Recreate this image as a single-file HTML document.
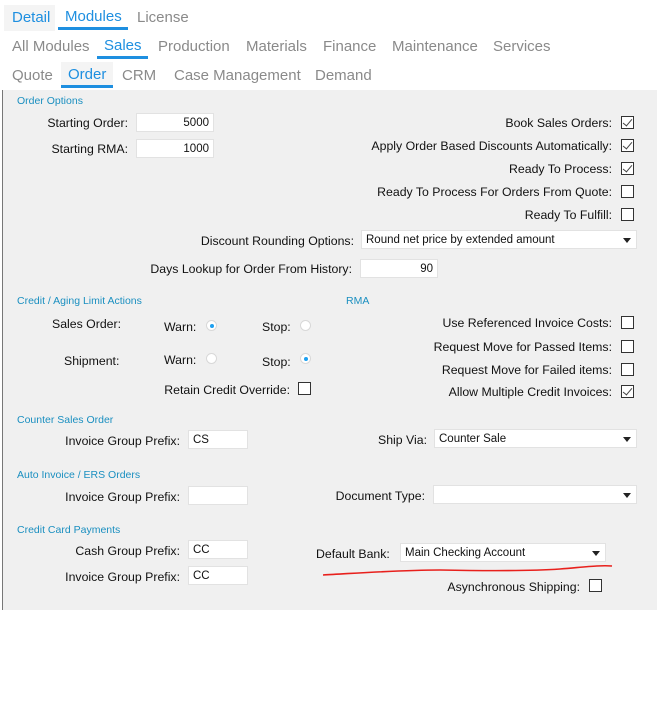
<!DOCTYPE html>
<html><head><meta charset="utf-8"><style>
*{margin:0;padding:0;box-sizing:border-box}
body{width:657px;height:703px;background:#fff;position:relative;overflow:hidden;font-family:"Liberation Sans",Arial,sans-serif;font-size:12.3px;color:#111}
.a{position:absolute;white-space:nowrap;line-height:14px}
.r{position:absolute;white-space:nowrap;line-height:14px;text-align:right}
.t{position:absolute;font-size:15px;color:#8a8a8a;line-height:18px;white-space:nowrap}
.b{color:#1e8fe0}
.ul{position:absolute;height:3px;background:#1e8fe0}
.h{position:absolute;font-size:10.5px;color:#1a8fc0;white-space:nowrap;line-height:12px}
.in{position:absolute;background:#fff;border:1px solid #e2e2e2;height:19px;line-height:19px;padding:0 4px;font-size:11.5px}
.cb{position:absolute;width:13px;height:13px;border:1px solid #333;background:#fff}
.cb.c::after{content:"";position:absolute;left:3px;top:0px;width:4px;height:8px;border:solid #444;border-width:0 1.3px 1.3px 0;transform:rotate(40deg)}
.rd{position:absolute;width:11px;height:11px;border-radius:50%;border:1px solid #d8d8d8;background:#fff}
.rd.f::after{content:"";position:absolute;left:2.5px;top:2.5px;width:4px;height:4px;border-radius:50%;background:#1ea0f0}
.dd::after{content:"";position:absolute;right:5px;top:7px;border:4px solid transparent;border-top:5px solid #222;border-bottom:0}
</style></head><body>
<div style="position:absolute;left:4px;top:5px;width:51px;height:26px;background:#f4f4f4"></div>
<div class="t b" style="left:12px;top:9px">Detail</div>
<div class="t b" style="left:65px;top:8px">Modules</div><div class="ul" style="left:58px;top:27px;width:70px"></div>
<div class="t" style="left:137px;top:9px">License</div>
<div class="t" style="left:12px;top:38px">All Modules</div>
<div class="t b" style="left:104px;top:37px">Sales</div><div class="ul" style="left:97px;top:56px;width:51px"></div>
<div class="t" style="left:158px;top:38px">Production</div>
<div class="t" style="left:246px;top:38px">Materials</div>
<div class="t" style="left:323px;top:38px">Finance</div>
<div class="t" style="left:392px;top:38px">Maintenance</div>
<div class="t" style="left:493px;top:38px">Services</div>
<div style="position:absolute;left:61px;top:62px;width:52px;height:26px;background:#f4f4f4"></div>
<div class="t" style="left:12px;top:67px">Quote</div>
<div class="t b" style="left:68px;top:66px">Order</div><div class="ul" style="left:61px;top:85px;width:52px"></div>
<div class="t" style="left:122px;top:67px">CRM</div>
<div class="t" style="left:174px;top:67px">Case Management</div>
<div class="t" style="left:315px;top:67px">Demand</div>

<div style="position:absolute;left:2px;top:90px;width:655px;height:520px;background:#f0f0f0;border-left:1px solid #777"></div>

<div class="h" style="left:17px;top:95px">Order Options</div>
<div class="r" style="right:529px;top:116px">Starting Order:</div>
<div class="in" style="left:136px;top:113px;width:78px;text-align:right">5000</div>
<div class="r" style="right:529px;top:142px">Starting RMA:</div>
<div class="in" style="left:136px;top:139px;width:78px;text-align:right">1000</div>

<div class="r" style="right:45px;top:116px">Book Sales Orders:</div><div class="cb c" style="left:621px;top:116px"></div>
<div class="r" style="right:45px;top:139px">Apply Order Based Discounts Automatically:</div><div class="cb c" style="left:621px;top:139px"></div>
<div class="r" style="right:45px;top:162px">Ready To Process:</div><div class="cb c" style="left:621px;top:162px"></div>
<div class="r" style="right:45px;top:185px">Ready To Process For Orders From Quote:</div><div class="cb" style="left:621px;top:185px"></div>
<div class="r" style="right:45px;top:208px">Ready To Fulfill:</div><div class="cb" style="left:621px;top:208px"></div>

<div class="r" style="right:303px;top:234px">Discount Rounding Options:</div>
<div class="in dd" style="left:361px;top:230px;width:276px">Round net price by extended amount</div>
<div class="r" style="right:305px;top:262px">Days Lookup for Order From History:</div>
<div class="in" style="left:360px;top:259px;width:78px;text-align:right">90</div>

<div class="h" style="left:17px;top:295px">Credit / Aging Limit Actions</div>
<div class="h" style="left:346px;top:295px">RMA</div>
<div class="a" style="left:52px;top:317px">Sales Order:</div>
<div class="a" style="left:164px;top:320px">Warn:</div><div class="rd f" style="left:206px;top:320px"></div>
<div class="a" style="left:262px;top:320px">Stop:</div><div class="rd" style="left:300px;top:320px"></div>
<div class="a" style="left:64px;top:354px">Shipment:</div>
<div class="a" style="left:164px;top:353px">Warn:</div><div class="rd" style="left:206px;top:353px"></div>
<div class="a" style="left:262px;top:355px">Stop:</div><div class="rd f" style="left:300px;top:353px"></div>
<div class="r" style="right:367px;top:383px">Retain Credit Override:</div><div class="cb" style="left:298px;top:382px"></div>

<div class="r" style="right:45px;top:316px">Use Referenced Invoice Costs:</div><div class="cb" style="left:621px;top:316px"></div>
<div class="r" style="right:45px;top:340px">Request Move for Passed Items:</div><div class="cb" style="left:621px;top:340px"></div>
<div class="r" style="right:45px;top:363px">Request Move for Failed items:</div><div class="cb" style="left:621px;top:363px"></div>
<div class="r" style="right:45px;top:385px">Allow Multiple Credit Invoices:</div><div class="cb c" style="left:621px;top:385px"></div>

<div class="h" style="left:17px;top:414px">Counter Sales Order</div>
<div class="r" style="right:477px;top:434px">Invoice Group Prefix:</div>
<div class="in" style="left:188px;top:430px;width:60px">CS</div>
<div class="r" style="right:230px;top:433px">Ship Via:</div>
<div class="in dd" style="left:434px;top:429px;width:203px">Counter Sale</div>

<div class="h" style="left:17px;top:469px">Auto Invoice / ERS Orders</div>
<div class="r" style="right:477px;top:490px">Invoice Group Prefix:</div>
<div class="in" style="left:188px;top:486px;width:60px"></div>
<div class="r" style="right:232px;top:489px">Document Type:</div>
<div class="in dd" style="left:433px;top:485px;width:204px"></div>

<div class="h" style="left:17px;top:524px">Credit Card Payments</div>
<div class="r" style="right:477px;top:544px">Cash Group Prefix:</div>
<div class="in" style="left:188px;top:540px;width:60px">CC</div>
<div class="r" style="right:477px;top:570px">Invoice Group Prefix:</div>
<div class="in" style="left:188px;top:566px;width:60px">CC</div>
<div class="a" style="left:316px;top:547px">Default Bank:</div>
<div class="in dd" style="left:400px;top:543px;width:206px">Main Checking Account</div>
<svg style="position:absolute;left:0;top:0" width="657" height="703"><path d="M323 575 C360 573 400 570 440 570 C490 571 530 571 560 569 C585 567 600 565 612 566" stroke="#e8201c" stroke-width="1.6" fill="none"/></svg>
<div class="r" style="right:77px;top:580px">Asynchronous Shipping:</div><div class="cb" style="left:589px;top:579px"></div>
</body></html>
